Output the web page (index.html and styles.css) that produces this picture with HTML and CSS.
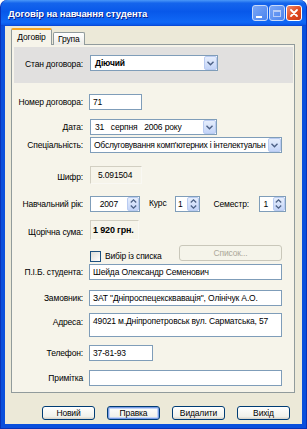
FILE: index.html
```html
<!DOCTYPE html>
<html lang="uk">
<head>
    <meta charset="UTF-8">
    <meta name="viewport" content="width=device-width, initial-scale=1.0">
    <title>Договір на навчання студента</title>
    <link rel="stylesheet" href="styles.css">
</head>
<body>

    <div class="window">
        <div class="titlebar">
            <span class="title">Договір на навчання студента</span>
            <div class="title-btns">
                <span class="tbtn tbtn-min"><span class="min-line"></span></span>
                <span class="tbtn tbtn-max"><span class="max-box"></span></span>
                <span class="tbtn tbtn-close">
                    <svg width="10" height="10" viewBox="0 0 10 10"><path d="M2 2 L8 8 M8 2 L2 8" stroke="#fff" stroke-width="1.8" stroke-linecap="round"/></svg>
                </span>
            </div>
        </div>

        <div class="client">
            <div class="tabs">
                <span class="tab tab-active">Договір</span>
                <span class="tab">Група</span>
            </div>

            <div class="panel">
                <div class="state-bar">
                    <span class="lbl lbl-state">Стан договора:</span>
                    <div class="combo combo-state"><span class="combo-text bold">Діючий</span><span class="drop"><svg width="7" height="5" viewBox="0 0 7 5"><path d="M0.5 0.8 L3.5 3.8 L6.5 0.8" fill="none" stroke="#4D6185" stroke-width="1.4"/></svg></span></div>
                </div>

                <div class="form">
                    <div class="row row-number">
                        <span class="lbl">Номер договора:</span>
                        <div class="field field-number">71</div>
                    </div>
                    <div class="row row-date">
                        <span class="lbl">Дата:</span>
                        <div class="combo combo-date"><span class="combo-text">31 &nbsp;&nbsp;серпня &nbsp;&nbsp;2006 року</span><span class="drop"><svg width="7" height="5" viewBox="0 0 7 5"><path d="M0.5 0.8 L3.5 3.8 L6.5 0.8" fill="none" stroke="#4D6185" stroke-width="1.4"/></svg></span></div>
                    </div>
                    <div class="row row-spec">
                        <span class="lbl">Спеціальність:</span>
                        <div class="combo combo-spec"><span class="combo-text combo-text-tight">Обслуговування комп'ютерних і інтелектуальн</span><span class="drop"><svg width="7" height="5" viewBox="0 0 7 5"><path d="M0.5 0.8 L3.5 3.8 L6.5 0.8" fill="none" stroke="#4D6185" stroke-width="1.4"/></svg></span></div>
                    </div>
                    <div class="row row-code">
                        <span class="lbl">Шифр:</span>
                        <div class="static static-code">5.091504</div>
                    </div>
                    <div class="row row-year">
                        <span class="lbl">Навчальний рік:</span>
                        <div class="spin spin-year"><span class="spin-val">2007</span><span class="spin-btn"><svg width="7" height="12" viewBox="0 0 7 12"><path d="M0.8 4.5 L3.5 1.8 L6.2 4.5 M0.8 7.5 L3.5 10.2 L6.2 7.5" fill="none" stroke="#4D6185" stroke-width="1.3"/></svg></span></div>
                        <span class="lbl-inline lbl-course">Курс</span>
                        <div class="spin spin-course"><span class="spin-val">1</span><span class="spin-btn"><svg width="7" height="12" viewBox="0 0 7 12"><path d="M0.8 4.5 L3.5 1.8 L6.2 4.5 M0.8 7.5 L3.5 10.2 L6.2 7.5" fill="none" stroke="#4D6185" stroke-width="1.3"/></svg></span></div>
                        <span class="lbl-inline lbl-sem">Семестр:</span>
                        <div class="spin spin-sem"><span class="spin-val">1</span><span class="spin-btn"><svg width="7" height="12" viewBox="0 0 7 12"><path d="M0.8 4.5 L3.5 1.8 L6.2 4.5 M0.8 7.5 L3.5 10.2 L6.2 7.5" fill="none" stroke="#4D6185" stroke-width="1.3"/></svg></span></div>
                    </div>
                    <div class="row row-sum">
                        <span class="lbl">Щорічна сума:</span>
                        <div class="static static-sum bold">1 920 грн.</div>
                    </div>
                    <div class="row row-check">
                        <span class="lbl"></span>
                        <span class="checkbox"></span>
                        <span class="check-label">Вибір із списка</span>
                        <span class="btn-list">Список...</span>
                    </div>
                    <div class="row row-name">
                        <span class="lbl">П.І.Б. студента:</span>
                        <div class="field field-wide">Шейда Олександр Семенович</div>
                    </div>
                    <div class="row row-client">
                        <span class="lbl">Замовник:</span>
                        <div class="field field-wide">ЗАТ "Дніпроспецексквавація", Олінічук А.О.</div>
                    </div>
                    <div class="row row-address">
                        <span class="lbl">Адреса:</span>
                        <div class="field field-wide field-area">49021 м.Дніпропетровськ вул. Сарматська, 57</div>
                    </div>
                    <div class="row row-phone">
                        <span class="lbl">Телефон:</span>
                        <div class="field field-phone">37-81-93</div>
                    </div>
                    <div class="row row-note">
                        <span class="lbl">Примітка</span>
                        <div class="field field-wide"></div>
                    </div>
                </div>
            </div>

            <div class="buttons">
                <button class="btn">Новий</button>
                <button class="btn btn-default">Правка</button>
                <button class="btn">Видалити</button>
                <button class="btn">Вихід</button>
            </div>
        </div>
    </div>

</body>
</html>
```

FILE: styles.css
```css
body {
    margin: 0;
    background: #ffffff;
    font-family: "Liberation Sans", Arial, sans-serif;
    font-size: 8.5px;
    letter-spacing: -0.15px;
    color: #000;
}
.window {
    width: 307px;
    height: 429px;
    box-sizing: border-box;
    background: #0a4fdc;
    border-radius: 7px 7px 0 0;
    display: flex;
    flex-direction: column;
    padding: 0 4px 4px;
    border: 1px solid #0832b8;
    border-top: none;
}
.titlebar {
    height: 26px;
    margin: 0 -4px;
    border-radius: 7px 7px 0 0;
    background: linear-gradient(#4a98f8 0%, #1464ec 12%, #0858ea 45%, #1068f6 85%, #0a5aec 94%, #0a42cc 100%);
    display: flex;
    align-items: center;
    padding: 0 4px 0 7px;
}
.title {
    color: #fff;
    font-weight: bold;
    font-size: 9.5px;
    letter-spacing: -0.1px;
    text-shadow: 1px 1px 0 #0a1e8a;
    flex: 1;
}
.title-btns {
    display: flex;
    gap: 1px;
}
.tbtn {
    width: 16px;
    height: 16px;
    box-sizing: border-box;
    border: 1px solid #fff;
    border-radius: 3px;
    display: flex;
    align-items: center;
    justify-content: center;
}
.tbtn-min, .tbtn-max {
    background: linear-gradient(135deg, #7aa6f6, #4b84ee);
    border-color: #c9daf9;
}
.min-line {
    width: 6px;
    height: 2px;
    background: #fff;
    margin-top: 7px;
    margin-right: 3px;
}
.max-box {
    width: 8px;
    height: 7px;
    box-sizing: border-box;
    border: 1px solid #b8cdf7;
    border-top-width: 2px;
}
.tbtn-close {
    background: linear-gradient(135deg, #ef8a6e, #e04a1f 55%, #c8381a);
}
.client {
    flex: 1;
    background: #ece9d8;
    display: flex;
    flex-direction: column;
    padding: 3px 7px 0 6px;
}
.tabs {
    display: flex;
    align-items: flex-end;
    height: 16px;
    margin-bottom: -1px;
    position: relative;
    z-index: 1;
}
.tab {
    height: 13px;
    box-sizing: border-box;
    border: 1px solid #919b9c;
    border-bottom: none;
    border-radius: 2px 2px 0 0;
    background: linear-gradient(#ffffff, #ecebe6);
    padding: 1px 4px 0;
    line-height: 11px;
}
.tab-active {
    height: 17px;
    width: 41px;
    background: #f6f4ea;
    border-top: 2px solid #f5a623;
    padding-top: 2px;
    text-align: center;
    margin-right: 1px;
}
.panel {
    border: 1px solid #919b9c;
    background: #f6f4ea;
    padding: 2px 1px 0 2px;
    height: 349px;
    box-sizing: border-box;
}
.state-bar {
    background: #e1e0df;
    height: 36px;
    display: flex;
    align-items: flex-start;
    padding-top: 8px;
    box-sizing: border-box;
}
.lbl {
    width: 69px;
    flex: none;
    text-align: right;
    margin-right: 6px;
    white-space: nowrap;
}
.lbl-state {
    margin-top: 4px;
}
.bold {
    font-weight: bold;
}
.combo, .field, .spin {
    height: 16px;
    box-sizing: border-box;
    border: 1px solid #7f9db9;
    background: #fff;
    display: flex;
    align-items: center;
}
.combo-text {
    flex: 1;
    padding-left: 4px;
    white-space: nowrap;
    overflow: hidden;
}
.combo-text-tight {
    padding-left: 3px;
    letter-spacing: -0.25px;
}
.drop {
    width: 13px;
    height: 14px;
    box-sizing: border-box;
    border: 1px solid #b9cbf1;
    border-radius: 2px;
    background: linear-gradient(#e6eefc, #c3d4f8);
    display: flex;
    align-items: center;
    justify-content: center;
    flex: none;
}
.combo-state {
    width: 128px;
    margin-left: 1px;
}
.combo-date {
    width: 127px;
    margin-left: 1px;
}
.combo-spec {
    width: 192px;
    margin-left: 1px;
}
.field {
    padding-left: 3px;
    white-space: nowrap;
    overflow: hidden;
}
.field-number {
    width: 53px;
}
.field-wide {
    width: 193px;
}
.field-area {
    height: 24px;
    align-items: flex-start;
    padding-top: 2px;
}
.field-phone {
    width: 64px;
}
.static {
    box-sizing: border-box;
    border: 1px solid;
    border-color: #d2cfc2 #f9f8f3 #f9f8f3 #d2cfc2;
    display: flex;
    align-items: center;
    margin-left: 1px;
}
.static-code {
    width: 52px;
    height: 18px;
    padding-left: 7px;
}
.static-sum {
    width: 49px;
    height: 20px;
    padding-left: 2px;
    font-size: 9px;
}
.spin {
    margin-left: 1px;
}
.spin-val {
    flex: 1;
    text-align: right;
    padding-right: 5px;
}
.spin-btn {
    width: 12px;
    height: 14px;
    box-sizing: border-box;
    border: 1px solid #b9cbf1;
    border-radius: 2px;
    background: linear-gradient(#e6eefc, #c3d4f8);
    display: flex;
    align-items: center;
    justify-content: center;
    flex: none;
}
.spin-year {
    width: 50px;
}
.spin-year .spin-val {
    padding-right: 9px;
}
.spin-course {
    width: 25px;
}
.spin-sem {
    width: 27px;
}
.lbl-inline {
    white-space: nowrap;
}
.lbl-course {
    margin-left: 9px;
    margin-right: 8px;
    margin-top: -3px;
}
.lbl-sem {
    margin-left: 13px;
    margin-right: 9px;
}
.row {
    display: flex;
    align-items: center;
}
.row-number { margin-top: 11px; }
.row-date { margin-top: 9px; }
.row-spec { margin-top: 2px; }
.row-code { margin-top: 13px; }
.row-year { margin-top: 12px; }
.row-sum { margin-top: 8px; }
.row-check {
    margin-top: 5px;
    height: 17px;
    align-items: flex-start;
}
.row-name { margin-top: 2px; }
.row-client { margin-top: 10px; }
.row-address {
    margin-top: 7px;
    align-items: flex-start;
}
.row-address .lbl {
    margin-top: 4px;
}
.row-phone { margin-top: 8px; }
.row-note { margin-top: 9px; }
.row-code .lbl, .row-sum .lbl {
    margin-top: 3px;
}
.checkbox {
    width: 11px;
    height: 11px;
    box-sizing: border-box;
    border: 1px solid #1c5180;
    background: linear-gradient(135deg, #dcdcd7, #ffffff);
    margin-top: 6px;
    margin-left: 1px;
}
.check-label {
    margin-left: 4px;
    margin-top: 6px;
}
.btn-list {
    margin-left: auto;
    margin-right: 11px;
    width: 103px;
    height: 16px;
    box-sizing: border-box;
    border: 1px solid #c9c7ba;
    border-radius: 3px;
    background: #f5f4ea;
    color: #aca899;
    display: flex;
    align-items: center;
    justify-content: center;
}
.buttons {
    display: flex;
    justify-content: flex-end;
    gap: 12px;
    margin-top: 13px;
    padding-right: 5px;
}
.btn {
    width: 53px;
    height: 14px;
    box-sizing: border-box;
    border: 1px solid #003c74;
    border-radius: 3px;
    background: linear-gradient(#ffffff, #f0f0ea 80%, #d6d0c5);
    font-family: "Liberation Sans", Arial, sans-serif;
    font-size: 8.5px;
    letter-spacing: -0.15px;
    padding: 0;
    color: #000;
}
.btn-default {
    box-shadow: inset 0 0 0 1px #7a9ce6, inset 0 0 0 2px #c4d5f5;
}
```
